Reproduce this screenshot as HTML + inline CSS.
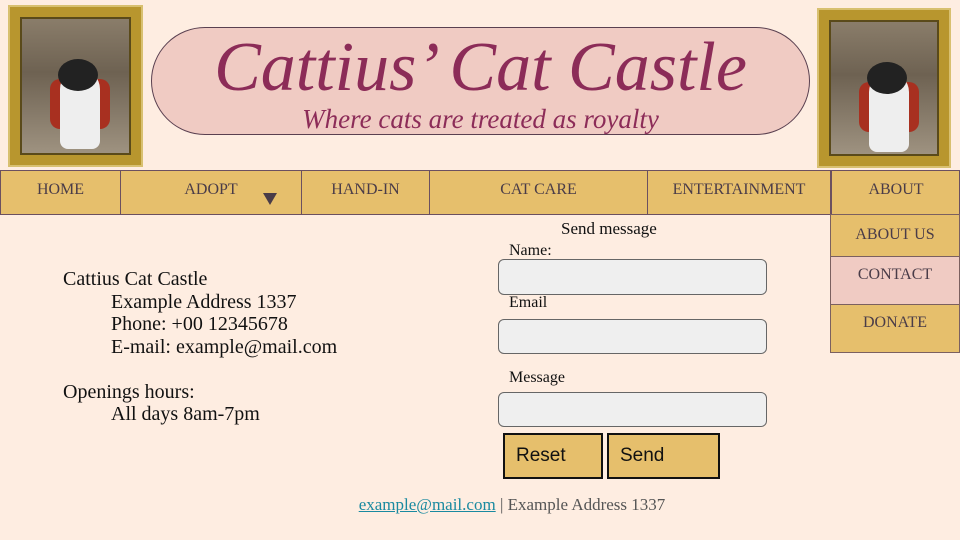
<!DOCTYPE html>
<html><head><meta charset="utf-8"><style>
*{margin:0;padding:0;box-sizing:border-box}
body{width:960px;height:540px;background:#feede1;font-family:"Liberation Serif",serif;color:#222;position:relative;overflow:hidden}
.a{position:absolute}
.pic{background:#b8962e;border:2px solid #d8c070;}
.pic .in{position:absolute;left:10px;top:10px;right:10px;bottom:10px;background:linear-gradient(180deg,#8a7d6a 0%,#6e6252 40%,#9e9280 100%);border:2px solid #5a4a1a}
.cat{position:absolute;left:38px;top:50px;width:40px;height:80px;background:#eee;border-radius:20px 20px 8px 8px}
.cape{position:absolute;left:28px;top:60px;width:60px;height:50px;background:#a83020;border-radius:10px}
.head{position:absolute;left:36px;top:40px;width:40px;height:32px;background:#222;border-radius:50%}
.nav{top:170px;left:0;width:960px;height:45px;background:#e6bf6c;border:1px solid #6b5060}
.nav div{position:absolute;top:0;height:43px;border-right:1px solid #6b5060;text-align:center;font-size:16px;color:#4a3c48;line-height:38px}
.dd{left:830px;width:130px;border:1px solid #7b6060;border-top:none;font-size:16px;color:#4a3c48;text-align:center}
.inp{left:498px;width:269px;background:#efefef;border:1px solid #666;border-radius:6px}
.lbl{font-size:16px;color:#111}
.btn{top:433px;height:46px;background:#e6bf6c;border:2px solid #111;font-family:"Liberation Sans",sans-serif;font-size:19px;padding:10px 0 0 11px;color:#111}
</style></head><body>
<div class="a pic" style="left:8px;top:5px;width:135px;height:162px"><div class="in"><div class="cape"></div><div class="cat"></div><div class="head"></div></div></div>
<div class="a pic" style="left:817px;top:8px;width:134px;height:160px"><div class="in"><div class="cape"></div><div class="cat"></div><div class="head"></div></div></div>
<div class="a" style="left:151px;top:27px;width:659px;height:108px;background:#f0cbc3;border:1px solid #5a4050;border-radius:54px"></div>
<div class="a" style="left:151px;top:28px;width:659px;text-align:center;font-style:italic;font-size:70px;color:#8c2c58;line-height:80px">Cattius’ Cat Castle</div>
<div class="a" style="left:151px;top:104px;width:659px;text-align:center;font-style:italic;font-size:27px;color:#8c2c58;line-height:30px">Where cats are treated as royalty</div>
<div class="a nav">
<div style="left:0;width:120px">HOME</div>
<div style="left:120px;width:181px">ADOPT<span style="position:absolute;left:142px;top:22px;width:0;height:0;border-left:7px solid transparent;border-right:7px solid transparent;border-top:12px solid #4a3c48"></span></div>
<div style="left:301px;width:128px">HAND-IN</div>
<div style="left:429px;width:218px">CAT CARE</div>
<div style="left:647px;width:183px">ENTERTAINMENT</div>
<div style="left:830px;width:129px;border-right:none;border-left:1px solid #6b5060">ABOUT</div>
</div>
<div class="a dd" style="top:214px;height:43px;background:#e6bf6c;line-height:40px;border-top:1px solid #7b6060;border-bottom:1px solid #7b6060">ABOUT US</div>
<div class="a dd" style="top:257px;height:48px;background:#f0cbc3;line-height:36px;border-bottom:1px solid #7b6060">CONTACT</div>
<div class="a dd" style="top:305px;height:48px;background:#e6bf6c;line-height:36px;border-bottom:1px solid #7b6060">DONATE</div>
<div class="a" style="left:63px;top:268px;font-size:20px;line-height:22.5px;color:#111">Cattius Cat Castle<br><span style="padding-left:48px">Example Address 1337</span><br><span style="padding-left:48px">Phone: +00 12345678</span><br><span style="padding-left:48px">E-mail: example@mail.com</span><br><br>Openings hours:<br><span style="padding-left:48px">All days 8am-7pm</span></div>
<div class="a lbl" style="left:561px;top:219px;font-size:17px">Send message</div>
<div class="a lbl" style="left:509px;top:242px">Name:</div>
<div class="a inp" style="top:259px;height:36px"></div>
<div class="a lbl" style="left:509px;top:294px">Email</div>
<div class="a inp" style="top:319px;height:35px"></div>
<div class="a lbl" style="left:509px;top:369px">Message</div>
<div class="a inp" style="top:392px;height:35px"></div>
<div class="a btn" style="left:503px;width:100px">Reset</div>
<div class="a btn" style="left:607px;width:113px">Send</div>
<div class="a" style="left:0;width:1024px;top:495px;text-align:center;font-size:17px;color:#555"><span style="color:#1a8aa0;text-decoration:underline">example@mail.com</span> | Example Address 1337</div>
</body></html>
